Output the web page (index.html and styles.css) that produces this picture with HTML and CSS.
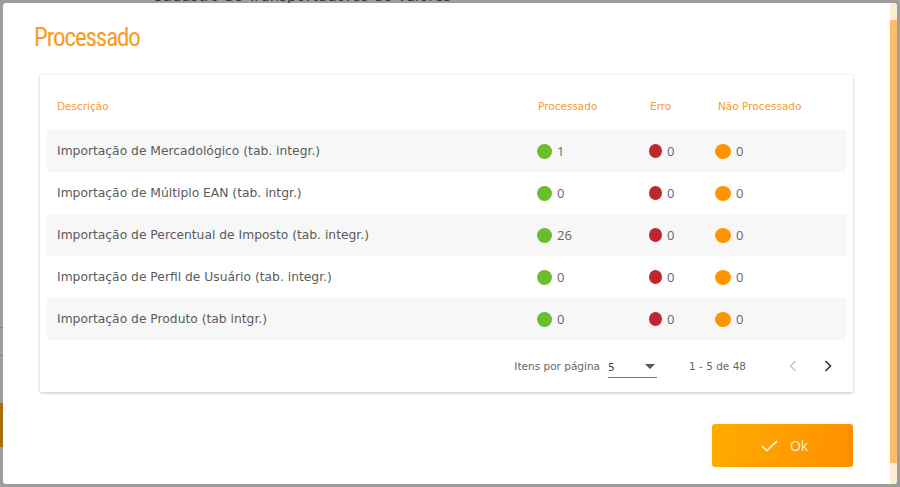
FILE: index.html
```html
<!DOCTYPE html>
<html lang="pt-BR">
<head>
<meta charset="utf-8">
<title>Processado</title>
<link rel="stylesheet" href="styles.css">
</head>
<body>
<div class="page">
  <div class="page-title">Cadastro de Transportadores de Valores</div>
  <div class="page-side">
    <div class="side-line"></div>
    <div class="side-line"></div>
    <div class="side-block"></div>
  </div>
</div>

<div class="dialog">
  <div class="dialog-body">
    <h1 class="dialog-title">Processado</h1>
    <div class="card">
      <div class="grid head">
        <div>Descrição</div>
        <div>Processado</div>
        <div>Erro</div>
        <div>Não Processado</div>
      </div>
      <div class="grid row alt">
        <div class="desc">Importação de Mercadológico (tab. integr.)</div>
        <div class="cell"><span class="dot green"></span>1</div>
        <div class="cell"><span class="dot red"></span>0</div>
        <div class="cell"><span class="dot orange"></span>0</div>
      </div>
      <div class="grid row">
        <div class="desc">Importação de Múltiplo EAN (tab. intgr.)</div>
        <div class="cell"><span class="dot green"></span>0</div>
        <div class="cell"><span class="dot red"></span>0</div>
        <div class="cell"><span class="dot orange"></span>0</div>
      </div>
      <div class="grid row alt">
        <div class="desc">Importação de Percentual de Imposto (tab. integr.)</div>
        <div class="cell"><span class="dot green"></span>26</div>
        <div class="cell"><span class="dot red"></span>0</div>
        <div class="cell"><span class="dot orange"></span>0</div>
      </div>
      <div class="grid row">
        <div class="desc">Importação de Perfil de Usuário (tab. integr.)</div>
        <div class="cell"><span class="dot green"></span>0</div>
        <div class="cell"><span class="dot red"></span>0</div>
        <div class="cell"><span class="dot orange"></span>0</div>
      </div>
      <div class="grid row alt">
        <div class="desc">Importação de Produto (tab intgr.)</div>
        <div class="cell"><span class="dot green"></span>0</div>
        <div class="cell"><span class="dot red"></span>0</div>
        <div class="cell"><span class="dot orange"></span>0</div>
      </div>
      <div class="pager">
        <span class="pager-label">Itens por página</span>
        <div class="select">
          <span>5</span>
          <span class="caret"></span>
        </div>
        <span class="range">1 - 5 de 48</span>
        <div class="nav">
          <svg class="chev disabled" width="8" height="12" viewBox="0 0 8 12"><path d="M6.5 1 L1.5 6 L6.5 11" fill="none" stroke="currentColor" stroke-width="1.6"/></svg>
          <svg class="chev" width="8" height="12" viewBox="0 0 8 12"><path d="M1.5 1 L6.5 6 L1.5 11" fill="none" stroke="currentColor" stroke-width="1.6"/></svg>
        </div>
      </div>
    </div>
    <div class="actions">
      <button class="ok">
        <svg width="17" height="12" viewBox="0 0 17 12"><path d="M1 6 L5.8 10.6 L16 1" fill="none" stroke="currentColor" stroke-width="1.8"/></svg>
        <span>Ok</span>
      </button>
    </div>
  </div>
  <div class="scrollbar"><div class="thumb"></div></div>
</div>
</body>
</html>
```

FILE: styles.css
```css
* { box-sizing: border-box; }
html, body { margin: 0; padding: 0; }
body {
  width: 900px;
  height: 487px;
  overflow: hidden;
  background: #9d9d9d;
  font-family: "DejaVu Sans", sans-serif;
  position: relative;
}
.page { height: 100%; }
.page-title {
  margin: -13px 0 0 152px;
  font-size: 15px;
  line-height: 18px;
  color: #333;
}
.page-side {
  margin-top: 322px;
  width: 3px;
  display: flex;
  flex-direction: column;
}
.side-line { height: 1px; background: #7d7d7d; margin-bottom: 27px; }
.side-block { height: 44px; margin-top: 20px; background: #a56f0d; }

.dialog {
  position: absolute;
  left: 3px;
  top: 3px;
  width: 894px;
  height: 481px;
  background: #fff;
  border-radius: 3px;
  display: flex;
  overflow: hidden;
}
.dialog-body {
  flex: 1;
  padding: 20px 37px 0 37px;
  display: flex;
  flex-direction: column;
}
.dialog-title {
  margin: 0 0 0 -6px;
  font-family: Roboto, sans-serif;
  font-stretch: condensed;
  font-weight: 400;
  font-size: 25px;
  line-height: 30px;
  letter-spacing: -1.1px;
  color: #fb9a1e;
}
.card {
  margin-top: 22px;
  background: #fff;
  box-shadow: 0 1px 3px rgba(0,0,0,0.22), 0 0 1px rgba(0,0,0,0.08);
  padding: 0 7px;
}
.grid {
  display: grid;
  grid-template-columns: 481px 112px 68px 1fr;
  padding-left: 10px;
  align-items: center;
}
.head {
  height: 55px;
  padding-top: 20px;
  padding-bottom: 13px;
  font-size: 10.5px;
  line-height: 22px;
  color: #fb9a2a;
}
.row {
  height: 42px;
  font-size: 12.3px;
  color: #5b5b5b;
}
.row.alt { background: #f7f7f7; }
.cell {
  display: flex;
  align-items: center;
  gap: 5px;
  font-family: "Open Sans", sans-serif;
  font-size: 13px;
  color: #666;
}
.dot { display: inline-block; border-radius: 50%; }
.dot.green { width: 15px; height: 15px; background: #6cbd2c; margin-left: -1px; }
.dot.red { width: 13px; height: 14px; background: #c0272d; margin-left: -1px; }
.dot.orange { width: 16px; height: 15px; background: #ff9300; margin-left: -3px; }

.pager {
  height: 52px;
  display: flex;
  align-items: center;
  justify-content: flex-end;
  font-size: 10.5px;
  color: #666;
  padding-right: 14px;
}
.pager-label { margin-right: 8px; }
.select {
  width: 49px;
  height: 22px;
  display: flex;
  align-items: center;
  justify-content: space-between;
  border-bottom: 1px solid #777;
  margin-top: 2px;
  color: #444;
  padding-right: 2px;
}
.caret {
  width: 0; height: 0;
  border-left: 5px solid transparent;
  border-right: 5px solid transparent;
  border-top: 5px solid #555;
}
.range { margin-left: 32px; }
.nav { display: flex; align-items: center; gap: 27px; margin-left: 43px; }
.chev { color: #333; display: block; }
.chev.disabled { color: #c6c6c6; }

.actions {
  margin-top: 32px;
  display: flex;
  justify-content: flex-end;
}
.ok {
  width: 141px;
  height: 43px;
  border: 0;
  border-radius: 3px;
  background: linear-gradient(100deg, #ffac00, #ff8f00);
  color: #fff0d6;
  display: flex;
  align-items: center;
  justify-content: center;
  gap: 12px;
  font-family: "Open Sans", sans-serif;
  font-size: 14px;
  padding: 0 0 0 4px;
}
.ok svg { display: block; margin-top: 1px; }

.scrollbar {
  width: 7px;
  background: #fdebd3;
  border-radius: 4px 4px 0 0;
  padding-top: 17px;
  padding-bottom: 21px;
  display: flex;
}
.thumb { flex: 1; background: #ffbd68; }
```
